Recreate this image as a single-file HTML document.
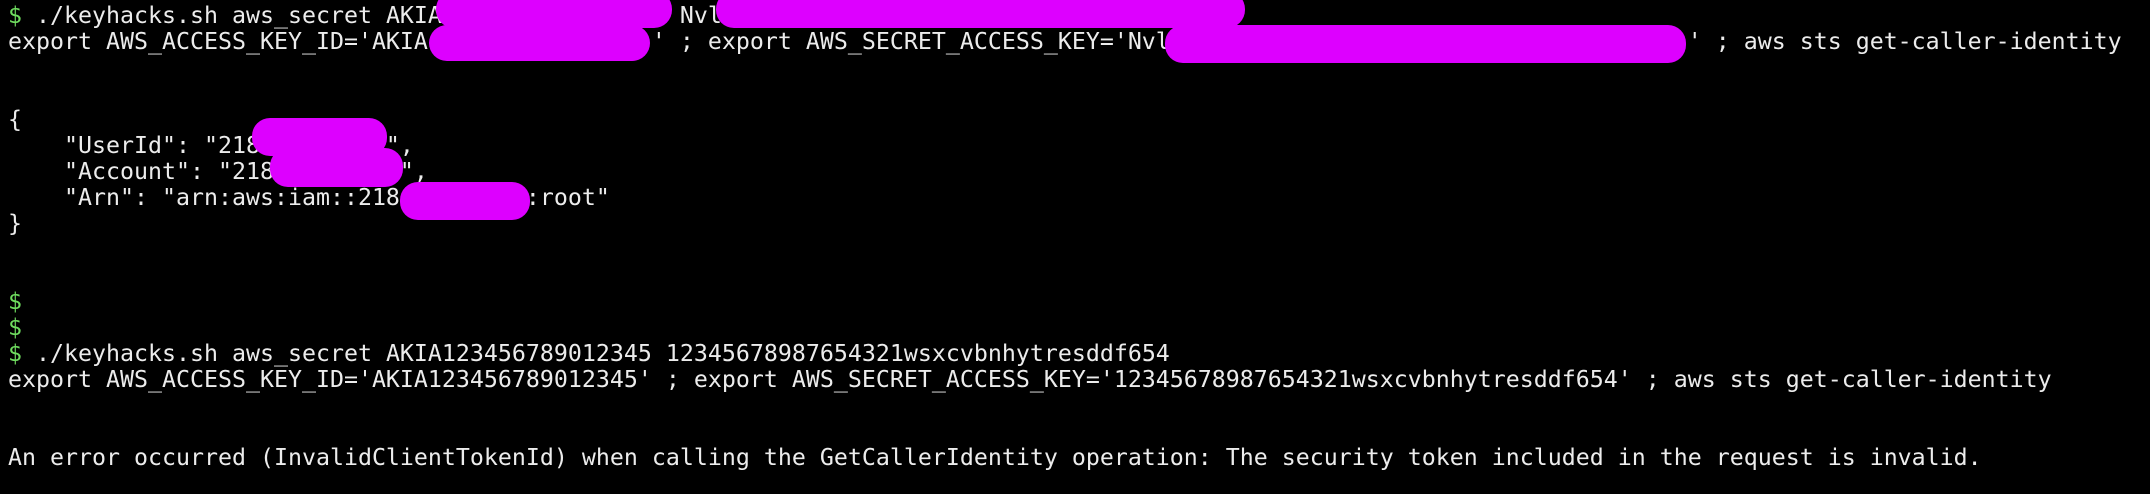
<!DOCTYPE html>
<html><head><meta charset="utf-8"><style>
html,body{margin:0;padding:0;background:#000;width:2150px;height:494px;overflow:hidden;position:relative}
pre{margin:0;position:absolute;left:8px;top:2.5px;font-family:"DejaVu Sans Mono","Liberation Mono",monospace;font-size:23.25px;line-height:26px;color:#ececec;white-space:pre}
.g{color:#6fdc5f}
.b{position:absolute;background:#dd00ff;border-radius:18px}
</style></head><body>
<pre><span class="g">$</span> ./keyhacks.sh aws_secret AKIA                 Nvl
export AWS_ACCESS_KEY_ID='AKIA                ' ; export AWS_SECRET_ACCESS_KEY='Nvl                                     ' ; aws sts get-caller-identity


{
    "UserId": "218         ",
    "Account": "218         ",
    "Arn": "arn:aws:iam::218         :root"
}


<span class="g">$</span>
<span class="g">$</span>
<span class="g">$</span> ./keyhacks.sh aws_secret AKIA123456789012345 12345678987654321wsxcvbnhytresddf654
export AWS_ACCESS_KEY_ID='AKIA123456789012345' ; export AWS_SECRET_ACCESS_KEY='12345678987654321wsxcvbnhytresddf654' ; aws sts get-caller-identity


An error occurred (InvalidClientTokenId) when calling the GetCallerIdentity operation: The security token included in the request is invalid.</pre>
<div class="b" style="left:436px;top:-9px;width:236px;height:37px"></div>
<div class="b" style="left:716px;top:-9px;width:529px;height:37px"></div>
<div class="b" style="left:429px;top:25px;width:221px;height:36px"></div>
<div class="b" style="left:1165px;top:25px;width:521px;height:38px"></div>
<div class="b" style="left:252px;top:118px;width:135px;height:38px"></div>
<div class="b" style="left:270px;top:148px;width:133px;height:39px"></div>
<div class="b" style="left:400px;top:182px;width:130px;height:38px"></div>
</body></html>
